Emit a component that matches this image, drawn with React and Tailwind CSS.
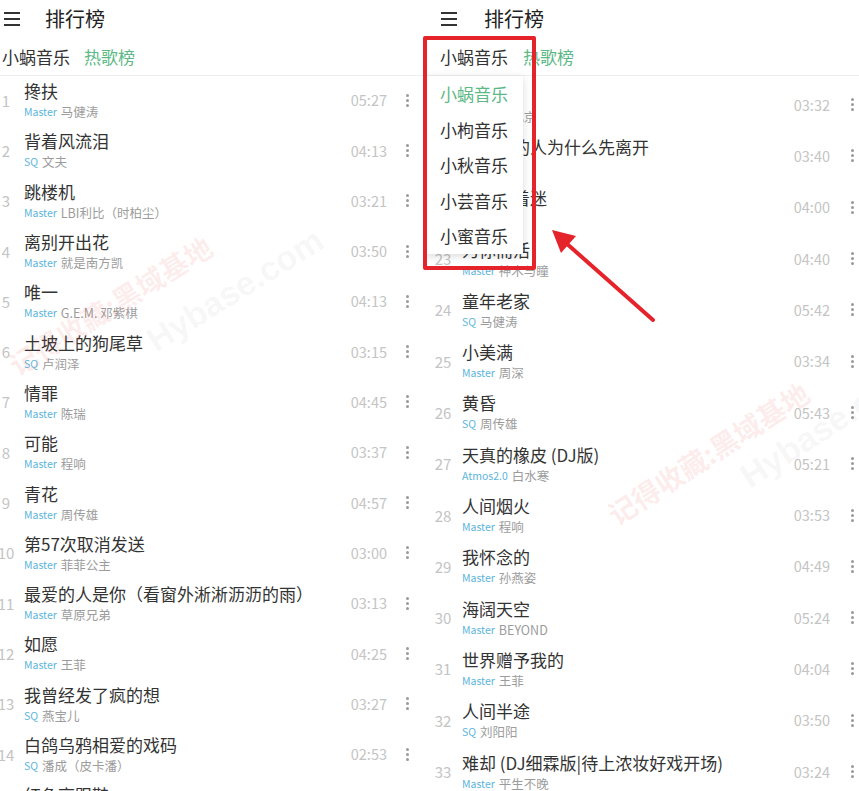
import React from "react";

const LEFT = [
  ["1", "搀扶", "Master", "马健涛", "05:27"],
  ["2", "背着风流泪", "SQ", "文夫", "04:13"],
  ["3", "跳楼机", "Master", "LBI利比（时柏尘）", "03:21"],
  ["4", "离别开出花", "Master", "就是南方凯", "03:50"],
  ["5", "唯一", "Master", "G.E.M. 邓紫棋", "04:13"],
  ["6", "土坡上的狗尾草", "SQ", "卢润泽", "03:15"],
  ["7", "情罪", "Master", "陈瑞", "04:45"],
  ["8", "可能", "Master", "程响", "03:37"],
  ["9", "青花", "Master", "周传雄", "04:57"],
  ["10", "第57次取消发送", "Master", "菲菲公主", "03:00"],
  ["11", "最爱的人是你（看窗外淅淅沥沥的雨）", "Master", "草原兄弟", "03:13"],
  ["12", "如愿", "Master", "王菲", "04:25"],
  ["13", "我曾经发了疯的想", "SQ", "燕宝儿", "03:27"],
  ["14", "白鸽乌鸦相爱的戏码", "SQ", "潘成（皮卡潘）", "02:53"],
  ["15", "红色高跟鞋", "Master", "蔡健雅", "03:26"],
];

const RIGHT = [
  ["20", "踏山河", "Master", "王北京", "03:32"],
  ["21", "我最爱的人为什么先离开", "SQ", "王小帅", "03:40"],
  ["22", "我为你着迷", "SQ", "张三", "04:00"],
  ["23", "为你而活", "Master", "神木与瞳", "04:40"],
  ["24", "童年老家", "SQ", "马健涛", "05:42"],
  ["25", "小美满", "Master", "周深", "03:34"],
  ["26", "黄昏", "SQ", "周传雄", "05:43"],
  ["27", "天真的橡皮 (DJ版)", "Atmos2.0", "白水寒", "05:21"],
  ["28", "人间烟火", "Master", "程响", "03:53"],
  ["29", "我怀念的", "Master", "孙燕姿", "04:49"],
  ["30", "海阔天空", "Master", "BEYOND", "05:24"],
  ["31", "世界赠予我的", "Master", "王菲", "04:04"],
  ["32", "人间半途", "SQ", "刘阳阳", "03:50"],
  ["33", "难却 (DJ细霖版|待上浓妆好戏开场)", "Master", "平生不晚", "03:24"],
];

const LS = {
  row: "h-[50.3px]",
  num: "w-[22px] -ml-[5px] mr-[7px]",
  dots: "w-[36px] ml-[2px]",
};
const RS = {
  row: "h-[51.3px]",
  num: "w-[22px] ml-[7px] mr-[8px]",
  dots: "w-[44px]",
};

function Dots() {
  return (
    <div className="flex flex-col items-center gap-[2px]">
      <span className="block w-[3px] h-[3px] rounded-full bg-[#9a9a9a]" />
      <span className="block w-[3px] h-[3px] rounded-full bg-[#9a9a9a]" />
      <span className="block w-[3px] h-[3px] rounded-full bg-[#9a9a9a]" />
    </div>
  );
}

function Row({ s, d }) {
  const [n, title, q, artist, dur] = d;
  return (
    <div className={`flex items-center ${s.row}`}>
      <div className={`${s.num} shrink-0 text-center text-[15px] text-[#c4c4c4] leading-none`}>{n}</div>
      <div className="flex-1 min-w-0 flex flex-col gap-[2px]">
        <div className="text-[17px] leading-[22px] text-[#333] whitespace-nowrap">{title}</div>
        <div className="flex items-center leading-[16px] whitespace-nowrap">
          <span className="text-[10.5px] text-[#5cb5dc]">{q}</span>
          <span className="ml-[4px] text-[12.5px] text-[#9c9c9c]">{artist}</span>
        </div>
      </div>
      <div className="shrink-0 text-[14.5px] text-[#c4c4c4]">{dur}</div>
      <div className={`${s.dots} shrink-0 flex justify-center`}>
        <Dots />
      </div>
    </div>
  );
}

function Burger() {
  return (
    <div className="flex flex-col gap-[4px] w-[16px]">
      <span className="block h-[2px] w-[16px] bg-[#333]" />
      <span className="block h-[2px] w-[16px] bg-[#333]" />
      <span className="block h-[2px] w-[16px] bg-[#333]" />
    </div>
  );
}

export default function App() {
  return (
    <div className="relative w-[859px] h-[791px] overflow-hidden bg-white font-['Noto_Sans_CJK_SC','Noto_Sans',sans-serif] flex">
      {/* Left panel */}
      <div className="relative w-[425px] shrink-0 overflow-hidden">
        <div className="h-[38px] flex items-center">
          <div className="ml-[4px]"><Burger /></div>
          <div className="ml-[25px] text-[20px] text-[#222]">排行榜</div>
        </div>
        <div className="h-[38px] flex items-center border-b border-[#eeeeee] text-[17px]">
          <span className="pl-[2px] text-[#333]">小蜗音乐</span>
          <span className="ml-[14px] text-[#5cb985]">热歌榜</span>
        </div>
        <div className="-mt-[1px]">
          {LEFT.map((d) => (
            <Row key={d[0]} s={LS} d={d} />
          ))}
        </div>
      </div>

      {/* Right panel */}
      <div className="relative w-[434px] shrink-0 overflow-hidden">
        <div className="w-[449px]">
          <div className="h-[38px] flex items-center">
            <div className="ml-[16px]"><Burger /></div>
            <div className="ml-[27px] text-[20px] text-[#222]">排行榜</div>
          </div>
          <div className="h-[38px] flex items-center border-b border-[#eeeeee] text-[17px]">
            <span className="pl-[15px] text-[#333]">小蜗音乐</span>
            <span className="ml-[15px] text-[#5cb985]">热歌榜</span>
          </div>
          <div className="mt-[3px]">
            {RIGHT.map((d) => (
              <Row key={d[0]} s={RS} d={d} />
            ))}
          </div>
        </div>

        {/* dropdown */}
        <div className="absolute left-0 top-[76px] w-[98px] bg-white shadow-[0_2px_8px_rgba(0,0,0,0.15)] text-[17px]">
          <div className="h-[35.5px] flex items-center pl-[15px] text-[#5cb985]">小蜗音乐</div>
          <div className="h-[35.5px] flex items-center pl-[15px] text-[#333]">小枸音乐</div>
          <div className="h-[35.5px] flex items-center pl-[15px] text-[#333]">小秋音乐</div>
          <div className="h-[35.5px] flex items-center pl-[15px] text-[#333]">小芸音乐</div>
          <div className="h-[35.5px] flex items-center pl-[15px] text-[#333]">小蜜音乐</div>
        </div>
      </div>

      {/* watermarks */}
      <div className="pointer-events-none absolute left-[110px] top-[305px] -translate-x-1/2 -translate-y-1/2 rotate-[-32deg] whitespace-nowrap text-[28px] font-bold text-[rgba(235,60,60,0.09)]">
        记得收藏:黑域基地
      </div>
      <div className="pointer-events-none absolute left-[235px] top-[290px] -translate-x-1/2 -translate-y-1/2 rotate-[-32deg] whitespace-nowrap text-[34px] font-bold font-['Liberation_Sans',sans-serif] text-[rgba(0,0,0,0.05)]">
        Hybase.com
      </div>
      <div className="pointer-events-none absolute left-[708px] top-[453px] -translate-x-1/2 -translate-y-1/2 rotate-[-33deg] whitespace-nowrap text-[28px] font-bold text-[rgba(235,60,60,0.1)]">
        记得收藏:黑域基地
      </div>
      <div className="pointer-events-none absolute left-[828px] top-[425px] -translate-x-1/2 -translate-y-1/2 rotate-[-33deg] whitespace-nowrap text-[34px] font-bold font-['Liberation_Sans',sans-serif] text-[rgba(0,0,0,0.05)]">
        Hybase.com
      </div>

      {/* red highlight box */}
      <div className="pointer-events-none absolute left-[423px] top-[36px] w-[113px] h-[234px] border-[4px] border-[#e5232b] rounded-[2px]" />

      {/* arrow */}
      <svg
        className="pointer-events-none absolute left-[540px] top-[220px]"
        width="125"
        height="110"
        viewBox="0 0 125 110"
      >
        <line x1="113" y1="100" x2="26" y2="23" stroke="#e5232b" strokeWidth="4" strokeLinecap="round" />
        <polygon points="12,10 36,16 21,33" fill="#e5232b" />
      </svg>
    </div>
  );
}
